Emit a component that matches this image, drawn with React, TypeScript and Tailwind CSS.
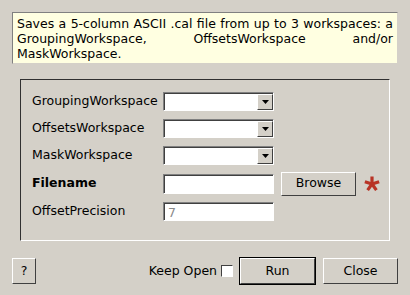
import React from 'react';

const font = { fontFamily: '"DejaVu Sans", Verdana, sans-serif' };

const Sunken: React.FC<{ children?: React.ReactNode; className?: string }> = ({ children, className = '' }) => (
  <div className={`border-t border-l border-[#808080] border-b border-r border-b-white border-r-white ${className}`}>
    <div className="h-full w-full border-t border-l border-[#404040] bg-white">{children}</div>
  </div>
);

const Combo: React.FC = () => (
  <Sunken className="w-[111px] h-[19px]">
    <div className="flex h-full justify-end">
      <div className="flex w-[16px] h-full items-center justify-center bg-[#d4d0c8] border-t border-l border-white border-b border-r border-b-[#404040] border-r-[#404040]">
        <svg width="7" height="4" viewBox="0 0 7 4">
          <path d="M0 0h7L3.5 4z" fill="#000" />
        </svg>
      </div>
    </div>
  </Sunken>
);

const Button: React.FC<{ label: string; className?: string }> = ({ label, className = '' }) => (
  <div
    className={`flex items-center justify-center bg-[#d4d0c8] border-t border-l border-white border-b border-r border-b-[#404040] border-r-[#404040] text-[12.5px] text-black ${className}`}
  >
    {label}
  </div>
);

const Asterisk: React.FC = () => (
  <svg width="16" height="16" viewBox="-8 -8 16 16">
    {[0, 72, 144, 216, 288].map((a) => (
      <rect key={a} x="-1.6" y="-7.5" width="3.2" height="7.5" fill="#b83325" transform={`rotate(${a})`} />
    ))}
  </svg>
);

export default function App() {
  const rows = [
    { label: 'GroupingWorkspace', kind: 'combo' },
    { label: 'OffsetsWorkspace', kind: 'combo' },
    { label: 'MaskWorkspace', kind: 'combo' },
  ];

  return (
    <div className="w-[410px] h-[295px] bg-[#d4d0c8] overflow-hidden text-black" style={font}>
      <div className="pt-[12px] px-[12px]">
        <div className="w-[386px] h-[52px] bg-[#ffffe1] border-t border-l border-[#808080] border-b border-r border-b-[#d4d0c8] border-r-[#d4d0c8] px-[4px] pt-[3px] text-[12.5px] leading-[15px] text-justify">
          Saves a 5-column ASCII .cal file from up to 3 workspaces: a GroupingWorkspace, OffsetsWorkspace and/or MaskWorkspace.
        </div>
      </div>

      <div className="ml-[20px] mt-[15px] w-[370px] h-[162px] border-t border-l border-[#303030] border-b border-r border-b-white border-r-white pl-[11px] pt-[8px]">
        {rows.map((r) => (
          <div key={r.label} className="flex h-[27px] items-center">
            <div className="w-[131px] text-[12.5px]">{r.label}</div>
            <Combo />
          </div>
        ))}
        <div className="flex h-[29px] items-center">
          <div className="w-[131px] text-[12.5px] font-bold">Filename</div>
          <Sunken className="w-[111px] h-[20px]" />
          <Button label="Browse" className="ml-[7px] w-[75px] h-[24px]" />
          <div className="ml-[8px] mt-[1px]">
            <Asterisk />
          </div>
        </div>
        <div className="flex h-[27px] items-center">
          <div className="w-[131px] text-[12.5px]">OffsetPrecision</div>
          <Sunken className="w-[111px] h-[19px]">
            <div className="pl-[3px] text-[12.5px] leading-[17px] text-[#8a8a8a]">7</div>
          </Sunken>
        </div>
      </div>

      <div className="flex items-center px-[12px] mt-[16px] h-[28px]">
        <Button label="?" className="w-[24px] h-[26px]" />
        <div className="ml-auto flex items-center">
          <span className="text-[12.5px] mr-[4px]">Keep Open</span>
          <div className="w-[12px] h-[12px] bg-white border-t border-l border-[#404040] border-b border-r border-b-white border-r-white" />
        </div>
        <div className="ml-[6px] border border-black">
          <Button label="Run" className="w-[75px] h-[26px]" />
        </div>
        <Button label="Close" className="ml-[7px] w-[75px] h-[26px]" />
      </div>
    </div>
  );
}
